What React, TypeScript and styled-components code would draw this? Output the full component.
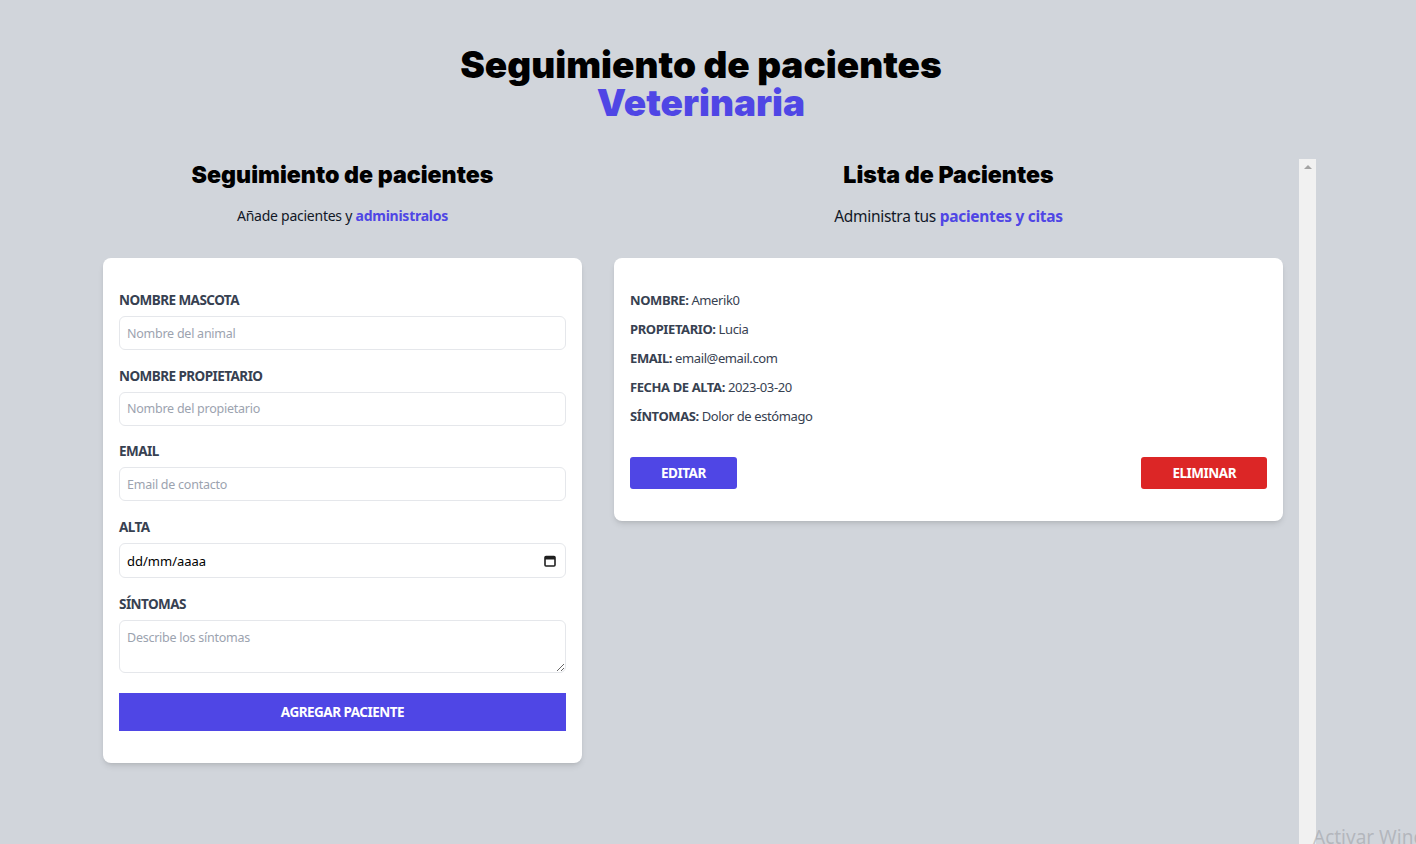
import React from "react";
import styled, { createGlobalStyle } from "styled-components";

const BODY_FONT = `"Noto Sans", "Open Sans", sans-serif`;
const HEAD_FONT = `Inter, Lato, sans-serif`;

const Global = createGlobalStyle`
  html, body { margin: 0; padding: 0; }
  body {
    background: #d1d5db;
    font-family: ${BODY_FONT};
    overflow: hidden;
    height: 844px;
  }
  * { box-sizing: border-box; }
`;

const Page = styled.div`
  width: 1416px;
  height: 844px;
  display: flex;
  flex-direction: column;
  position: relative;
`;

const Title = styled.h1`
  margin: 46px 0 0;
  padding-right: 14px;
  text-align: center;
  font-family: ${HEAD_FONT};
  font-weight: 900;
  font-size: 37px;
  line-height: 38px;
  color: #000;
`;

const Accent = styled.span`
  color: #4f46e5;
  display: block;
`;

const Columns = styled.div`
  margin: 37px 0 0 87px;
  width: 1229px;
  display: flex;
  flex: 1;
  min-height: 0;
`;

const LeftCol = styled.section`
  width: 511px;
  flex-shrink: 0;
`;

const RightCol = styled.section`
  flex: 1;
  display: flex;
  min-height: 0;
`;

const RightContent = styled.div`
  flex: 1;
`;

const ScrollTrack = styled.div`
  width: 17px;
  background: #f1f1f1;
  display: flex;
  justify-content: center;
  padding-top: 6px;
`;

const ArrowUp = styled.div`
  width: 0;
  height: 0;
  border-left: 4px solid transparent;
  border-right: 4px solid transparent;
  border-bottom: 4px solid #a3a3a3;
`;

const SectionHeading = styled.h2`
  margin: 0;
  text-align: center;
  font-family: ${HEAD_FONT};
  font-weight: 900;
  font-size: 23.2px;
  line-height: 32px;
  color: #000;
`;

const Subtitle = styled.p<{ $size: number; $spacing: number }>`
  margin: 13px 0 0;
  text-align: center;
  font-size: ${(p) => p.$size}px;
  letter-spacing: ${(p) => p.$spacing}px;
  line-height: 24px;
  color: #111827;
`;

const Strong = styled.span`
  color: #4f46e5;
  font-weight: 700;
`;

const Card = styled.div`
  margin: 30px 16px 0;
  background: #fff;
  border-radius: 8px;
  box-shadow: 0 4px 6px -1px rgba(0, 0, 0, 0.1), 0 2px 4px -2px rgba(0, 0, 0, 0.1);
  padding: 32px 16px;
`;

const Field = styled.div`
  margin-bottom: 15.7px;
`;

const Label = styled.label`
  display: block;
  font-size: 13.5px;
  letter-spacing: -0.55px;
  line-height: 20px;
  font-weight: 700;
  text-transform: uppercase;
  color: #374151;
`;

const inputBase = `
  display: block;
  width: 100%;
  margin-top: 6px;
  border: 1px solid #e5e7eb;
  border-radius: 6px;
  padding: 0 7px;
  font-family: ${BODY_FONT};
  font-size: 12.5px;
  letter-spacing: -0.25px;
  color: #111827;
  background: #fff;
  outline: none;
  &::placeholder { color: #9ca3af; }
`;

const Input = styled.input`
  ${inputBase}
  height: 34px;
`;

const DateBox = styled.div`
  ${inputBase}
  height: 35px;
  display: flex;
  align-items: center;
  justify-content: space-between;
  padding-right: 9px;
  font-size: 13px;
  letter-spacing: 0;
  color: #000;
`;

const TextArea = styled.textarea`
  ${inputBase}
  height: 53px;
  padding-top: 8px;
  resize: vertical;
`;

const SubmitButton = styled.button`
  display: block;
  width: 100%;
  height: 38px;
  margin-top: 20px;
  border: none;
  background: #4f46e5;
  color: #fff;
  font-family: ${BODY_FONT};
  font-weight: 700;
  font-size: 13.5px;
  letter-spacing: -0.5px;
  text-transform: uppercase;
`;

const InfoLine = styled.p`
  margin: 0 0 9px;
  font-size: 13px;
  letter-spacing: -0.4px;
  line-height: 20px;
  color: #374151;
`;

const InfoLabel = styled.span`
  font-weight: 700;
  text-transform: uppercase;
`;

const InfoValue = styled.span`
  font-weight: 400;
  color: #374151;
`;

const Actions = styled.div`
  display: flex;
  justify-content: space-between;
  margin-top: 31px;
`;

const ActionButton = styled.button<{ $variant: "edit" | "delete" }>`
  height: 32px;
  padding: 0 ${(p) => (p.$variant === "edit" ? 31 : 31)}px;
  border: none;
  border-radius: 3px;
  background: ${(p) => (p.$variant === "edit" ? "#4f46e5" : "#dc2626")};
  color: #fff;
  font-family: ${BODY_FONT};
  font-weight: 700;
  font-size: 13.5px;
  letter-spacing: -0.5px;
  text-transform: uppercase;
`;

const Watermark = styled.div`
  position: absolute;
  left: 1313px;
  top: 824px;
  font-family: "Noto Sans", sans-serif;
  font-size: 19px;
  color: rgba(150, 152, 158, 0.5);
  white-space: nowrap;
`;

const CalendarIcon = () => (
  <svg width="12" height="12" viewBox="0 0 12 12">
    <rect x="1" y="1.5" width="10" height="9.5" rx="1" fill="none" stroke="#1f1f1f" strokeWidth="1.6" />
    <rect x="1" y="1.5" width="10" height="3" fill="#1f1f1f" />
  </svg>
);

const patient = [
  ["Nombre", "Amerik0"],
  ["Propietario", "Lucia"],
  ["Email", "email@email.com"],
  ["Fecha de alta", "2023-03-20"],
  ["Síntomas", "Dolor de estómago"],
];

export default function App() {
  return (
    <Page>
      <Global />
      <Title>
        Seguimiento de pacientes <Accent>Veterinaria</Accent>
      </Title>
      <Columns>
        <LeftCol>
          <SectionHeading>Seguimiento de pacientes</SectionHeading>
          <Subtitle $size={14} $spacing={-0.25}>
            Añade pacientes y <Strong>administralos</Strong>
          </Subtitle>
          <Card as="form" onSubmit={(e: React.FormEvent) => e.preventDefault()}>
            <Field>
              <Label htmlFor="mascota">Nombre mascota</Label>
              <Input id="mascota" placeholder="Nombre del animal" />
            </Field>
            <Field>
              <Label htmlFor="propietario">Nombre propietario</Label>
              <Input id="propietario" placeholder="Nombre del propietario" />
            </Field>
            <Field>
              <Label htmlFor="email">Email</Label>
              <Input id="email" placeholder="Email de contacto" />
            </Field>
            <Field>
              <Label>Alta</Label>
              <DateBox>
                <span>dd/mm/aaaa</span>
                <CalendarIcon />
              </DateBox>
            </Field>
            <Field>
              <Label htmlFor="sintomas">Síntomas</Label>
              <TextArea id="sintomas" placeholder="Describe los síntomas" />
            </Field>
            <SubmitButton type="submit">Agregar paciente</SubmitButton>
          </Card>
        </LeftCol>
        <RightCol>
          <RightContent>
            <SectionHeading>Lista de Pacientes</SectionHeading>
            <Subtitle $size={15.5} $spacing={-0.3}>
              Administra tus <Strong>pacientes y citas</Strong>
            </Subtitle>
            <Card>
              {patient.map(([k, v]) => (
                <InfoLine key={k}>
                  <InfoLabel>{k}:</InfoLabel> <InfoValue>{v}</InfoValue>
                </InfoLine>
              ))}
              <Actions>
                <ActionButton $variant="edit">Editar</ActionButton>
                <ActionButton $variant="delete">Eliminar</ActionButton>
              </Actions>
            </Card>
          </RightContent>
          <ScrollTrack>
            <ArrowUp />
          </ScrollTrack>
        </RightCol>
      </Columns>
      <Watermark>Activar Windows</Watermark>
    </Page>
  );
}
